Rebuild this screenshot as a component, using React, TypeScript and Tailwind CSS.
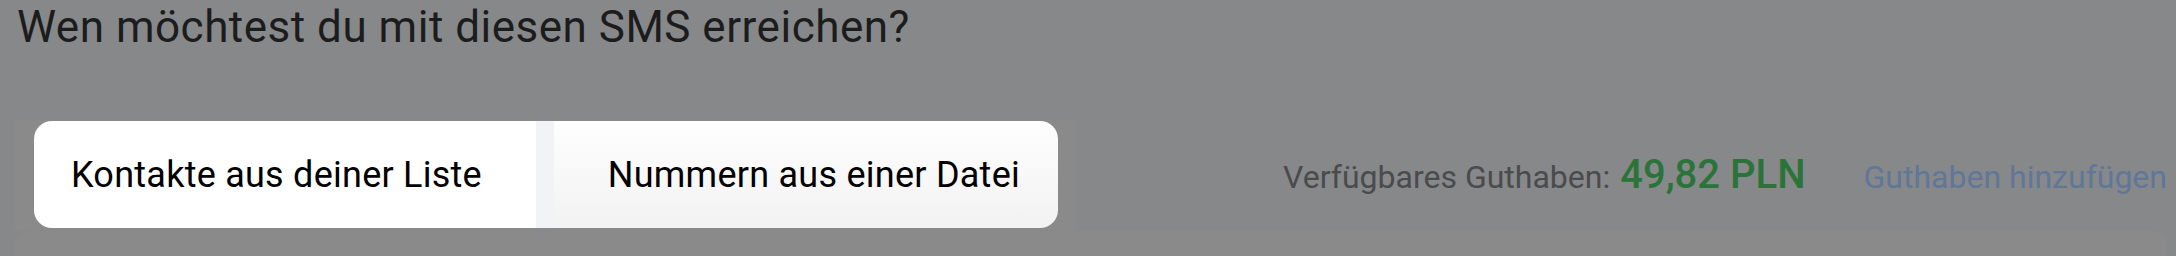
export default function App() {
  return (
    <div className="w-[2176px] h-[256px] overflow-hidden bg-[#87888a] font-['Roboto',sans-serif]">
      <h1 className="pl-[17px] pt-[1px] text-[44px] leading-[52px] tracking-[0.5px] font-normal text-[#1c1c1d]">
        Wen möchtest du mit diesen SMS erreichen?
      </h1>
      <div className="mt-[67px] flex items-center pl-[15px] pr-[9px]">
        <div className="w-[1061px] h-[110px] bg-[#8a8a8a] pl-[19px] pt-px">
          <div className="flex w-[1024px] h-[107px] rounded-[18px] overflow-hidden">
            <button className="w-[502px] h-full bg-white pl-[37px] text-left text-[36px] tracking-[0.25px] text-black">
              Kontakte aus deiner Liste
            </button>
            <div className="w-[18px] h-full bg-[#f2f3f7]" />
            <button className="flex-1 h-full bg-gradient-to-b from-[#fefefe] to-[#f2f2f2] pr-[38px] text-right text-[36px] tracking-[0.25px] text-black">
              Nummern aus einer Datei
            </button>
          </div>
        </div>
        <div className="ml-auto flex items-baseline">
          <span className="text-[32px] text-[#4a4b4d]">Verfügbares Guthaben:</span>
          <span className="ml-[10px] text-[40px] font-medium text-[#2a7339]">49,82 PLN</span>
          <span className="ml-[58px] text-[32px] text-[#5f7798]">Guthaben hinzufügen</span>
        </div>
      </div>
      <div className="mx-[15px] mr-[9px] mt-px h-[40px] rounded-t-[14px] bg-[#8a8a8a]" />
    </div>
  );
}
